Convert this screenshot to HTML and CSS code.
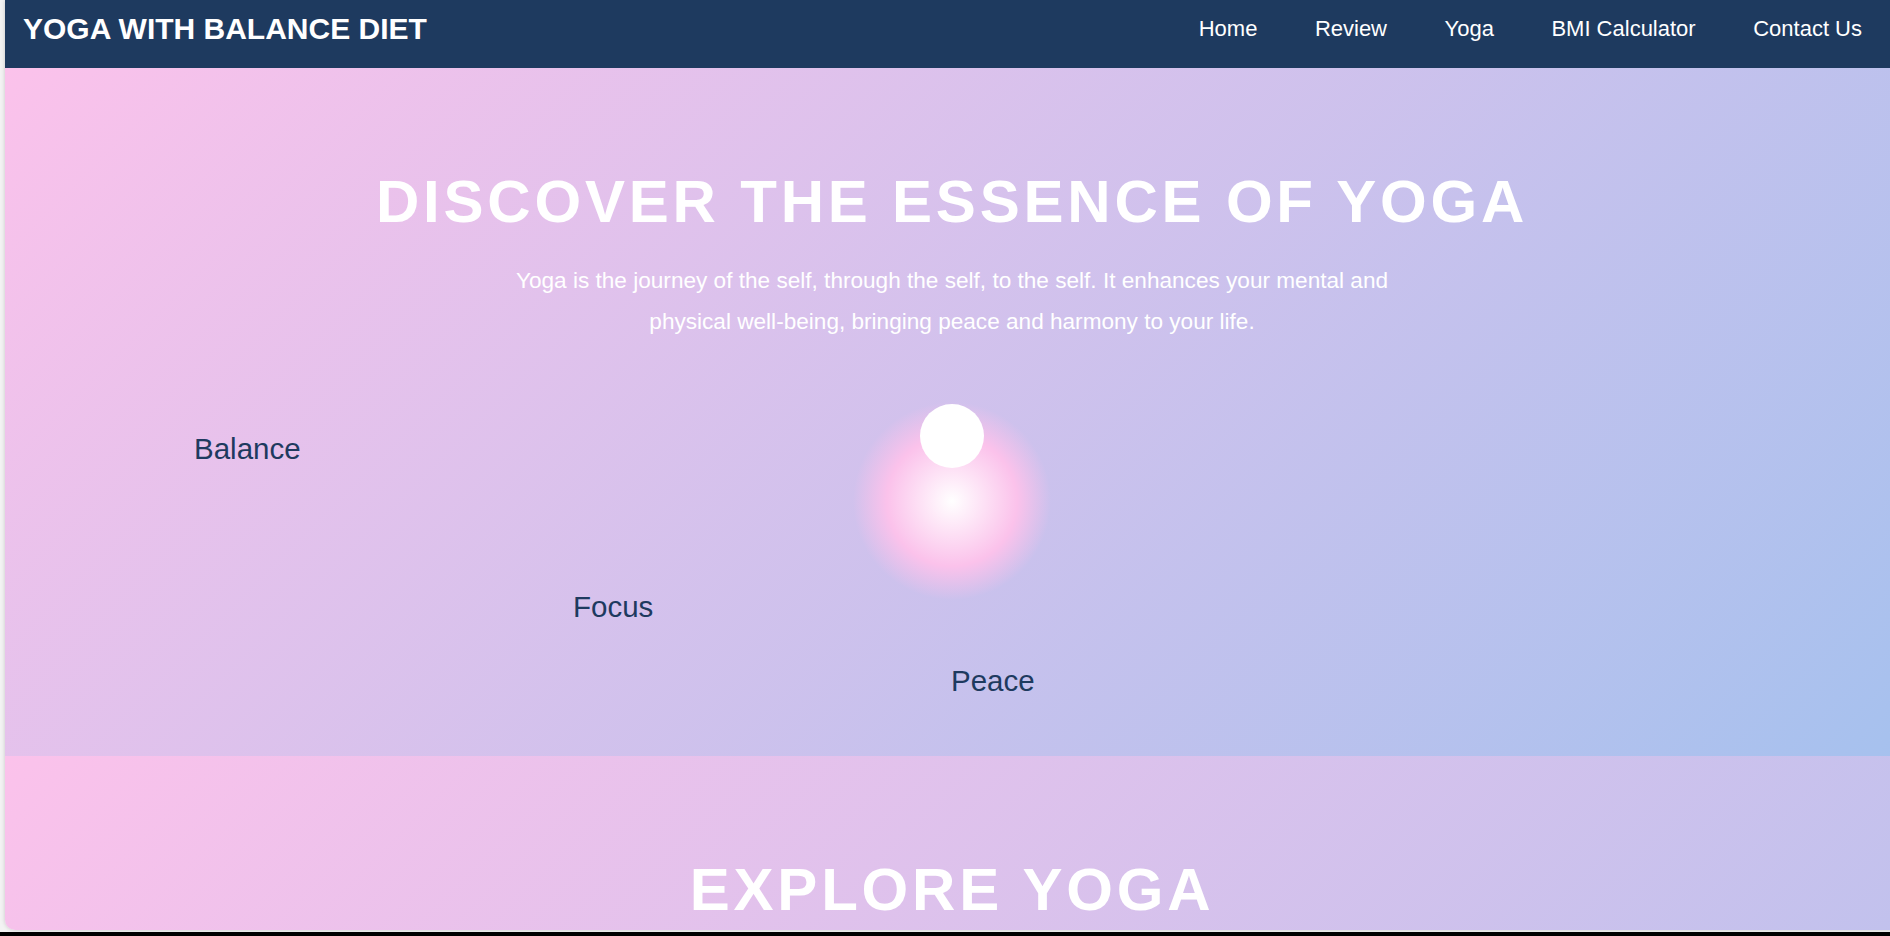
FILE: index.html
```html
<!DOCTYPE html>
<html lang="en">
<head>
<meta charset="utf-8">
<title>Yoga With Balance Diet</title>
<link rel="stylesheet" href="styles.css">
</head>
<body>
<div class="window">
  <header class="navbar">
    <div class="logo">YOGA WITH BALANCE DIET</div>
    <nav>
      <ul class="nav-links">
        <li><a href="#home">Home</a></li>
        <li><a href="#review">Review</a></li>
        <li><a href="#yoga">Yoga</a></li>
        <li><a href="#bmi">BMI Calculator</a></li>
        <li><a href="#contact">Contact Us</a></li>
      </ul>
    </nav>
  </header>

  <section class="hero" id="home">
    <h1 class="hero-title">DISCOVER THE ESSENCE OF YOGA</h1>
    <p class="hero-text">Yoga is the journey of the self, through the self, to the self. It enhances your mental and physical well-being, bringing peace and harmony to your life.</p>
    <div class="orb"><span class="orb-moon"></span></div>
    <span class="float-word word-balance">Balance</span>
    <span class="float-word word-focus">Focus</span>
    <span class="float-word word-peace">Peace</span>
  </section>

  <section class="explore" id="yoga">
    <h2 class="section-title">EXPLORE YOGA</h2>
  </section>
</div>
<div class="frame-edge"></div>
</body>
</html>
```

FILE: styles.css
```css
html, body {
  margin: 0;
  padding: 0;
}

body {
  background: #f3f3f3;
  font-family: "Liberation Sans", Arial, sans-serif;
  height: 936px;
  overflow: hidden;
}

.window {
  margin-left: 5px;
  width: calc(100vw + 4px);
  height: 930px;
  overflow: hidden;
  border-bottom-left-radius: 10px;
  box-shadow: 0 0 4px rgba(0, 0, 0, 0.18);
  margin-bottom: 2px;
}

.frame-edge {
  height: 4px;
  background: #000;
}

/* NAVBAR */
.navbar {
  height: 68px;
  box-sizing: border-box;
  background: #1e3a5f;
  display: flex;
  justify-content: space-between;
  align-items: center;
  padding: 0 37px 11px 18px;
}

.logo {
  color: #fff;
  font-weight: bold;
  font-size: 30px;
}

.nav-links {
  list-style: none;
  margin: 0;
  padding: 0;
  display: flex;
  gap: 57.5px;
}

.nav-links a {
  color: #fff;
  text-decoration: none;
  font-size: 22px;
}

/* HERO */
.hero {
  position: relative;
  height: 688px;
  box-sizing: border-box;
  padding: 104px 20px 0;
  background: linear-gradient(135deg, #fbc2eb 0%, #a6c1ee 100%);
  text-align: center;
}

.hero-title {
  margin: 0;
  color: #fff;
  font-size: 60px;
  line-height: 60px;
  font-weight: bold;
  letter-spacing: 3.8px;
}

.hero-text {
  max-width: 900px;
  margin: 29px auto 0;
  color: #fff;
  font-size: 22.6px;
  line-height: 40.5px;
}

.orb {
  position: relative;
  width: 200px;
  height: 200px;
  margin: 59px auto 0;
  border-radius: 50%;
  background: radial-gradient(circle, #ffffff 0%, #fbc2eb 46%, rgba(251, 194, 235, 0) 70%);
}

.orb-moon {
  position: absolute;
  top: 3px;
  left: 50%;
  width: 64px;
  height: 64px;
  margin-left: -32px;
  border-radius: 50%;
  background: #fff;
}

.float-word {
  position: absolute;
  color: #1e3a5f;
  font-size: 29.5px;
  line-height: 34px;
}

.word-balance { left: 189px; top: 364px; }
.word-focus { left: 568px; top: 522px; }
.word-peace { left: 946px; top: 596px; }

/* EXPLORE */
.explore {
  min-height: 1160px;
  box-sizing: border-box;
  padding: 104px 20px 60px;
  background: linear-gradient(135deg, #fbc2eb 0%, #a6c1ee 100%);
  text-align: center;
}

.section-title {
  margin: 0;
  color: #fff;
  font-size: 60px;
  line-height: 60px;
  font-weight: bold;
  letter-spacing: 3.8px;
}
```
